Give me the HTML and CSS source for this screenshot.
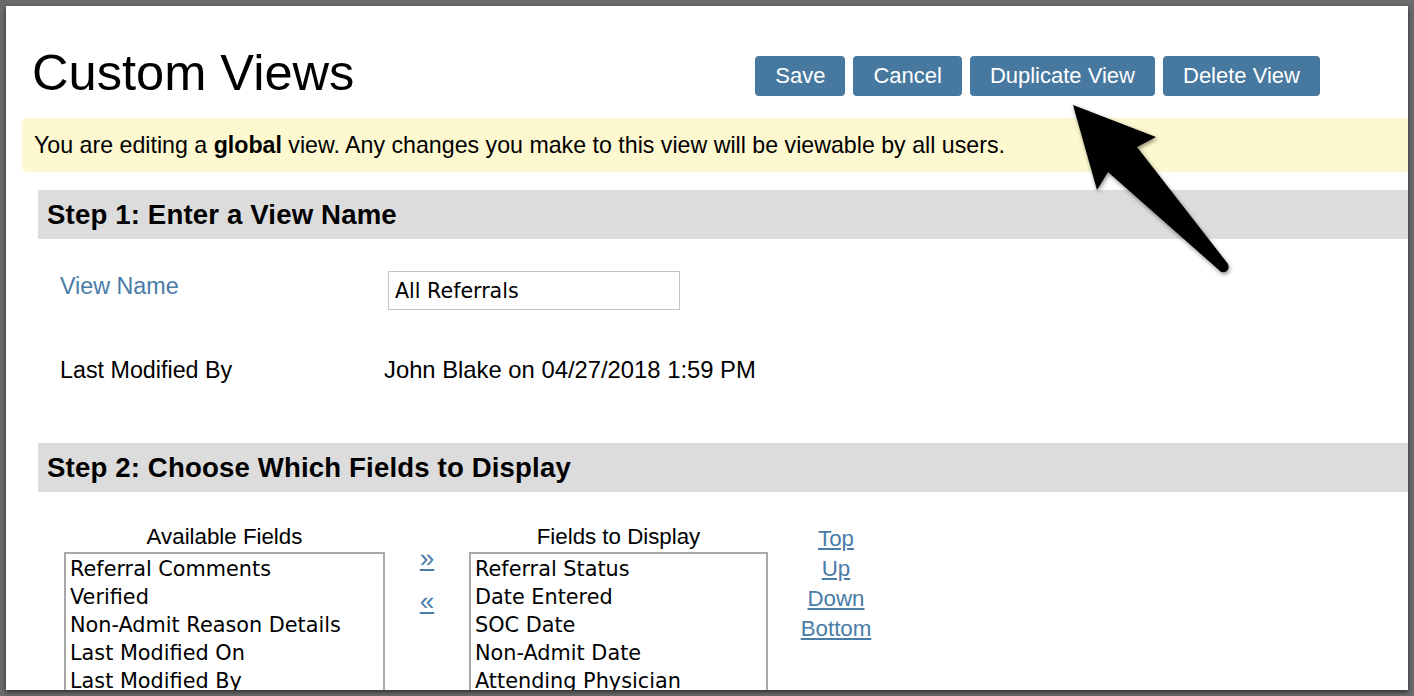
FILE: index.html
```html
<!DOCTYPE html>
<html lang="en">
<head>
<meta charset="utf-8">
<title>Custom Views</title>
<link rel="stylesheet" href="styles.css">
</head>
<body>
<div class="window">
  <header class="page-head">
    <h1 class="page-title">Custom Views</h1>
    <div class="actions">
      <button class="btn" type="button">Save</button>
      <button class="btn" type="button">Cancel</button>
      <button class="btn" type="button">Duplicate View</button>
      <button class="btn" type="button">Delete View</button>
    </div>
  </header>

  <div class="notice">You are editing a <b>global</b> view. Any changes you make to this view will be viewable by all users.</div>

  <section class="step step-name">
    <h2 class="step-title">Step 1: Enter a View Name</h2>
    <div class="form-grid">
      <label class="field-label link-text" for="view-name">View Name</label>
      <input class="text-input" id="view-name" type="text" value="All Referrals">
      <span class="field-label">Last Modified By</span>
      <span class="field-value">John Blake on 04/27/2018 1:59 PM</span>
    </div>
  </section>

  <section class="step step-fields">
    <h2 class="step-title">Step 2: Choose Which Fields to Display</h2>
    <div class="chooser">
      <div class="list-col list-available">
        <div class="list-label">Available Fields</div>
        <ul class="listbox">
          <li>Referral Comments</li>
          <li>Verified</li>
          <li>Non-Admit Reason Details</li>
          <li>Last Modified On</li>
          <li>Last Modified By</li>
        </ul>
      </div>
      <div class="move-col">
        <a class="move-link" href="#">&raquo;</a>
        <a class="move-link" href="#">&laquo;</a>
      </div>
      <div class="list-col list-display">
        <div class="list-label">Fields to Display</div>
        <ul class="listbox">
          <li>Referral Status</li>
          <li>Date Entered</li>
          <li>SOC Date</li>
          <li>Non-Admit Date</li>
          <li>Attending Physician</li>
        </ul>
      </div>
      <div class="order-col">
        <a class="order-link" href="#">Top</a>
        <a class="order-link" href="#">Up</a>
        <a class="order-link" href="#">Down</a>
        <a class="order-link" href="#">Bottom</a>
      </div>
    </div>
  </section>

  <svg class="callout-arrow" viewBox="1060 95 180 190" width="180" height="190" aria-hidden="true">
    <defs>
      <filter id="arrow-shadow" x="-20%" y="-20%" width="140%" height="140%">
        <feDropShadow dx="1" dy="2" stdDeviation="2" flood-color="#000" flood-opacity="0.45"/>
      </filter>
    </defs>
    <path filter="url(#arrow-shadow)" fill="#000"
      d="M1073 105 L1156 137 L1137 147 L1228 264 Q1230 270 1225 272 Q1221 273 1219 270 L1108 172 L1097 190 Z"/>
  </svg>
</div>
</body>
</html>
```

FILE: styles.css
```css
html, body {
  margin: 0;
  padding: 0;
}

body {
  background: #6b6b6b;
  width: 1414px;
  height: 696px;
  overflow: hidden;
  font-family: "Liberation Sans", Arial, Helvetica, sans-serif;
  color: #000;
}

.window {
  position: relative;
  margin: 6px;
  width: 1402px;
  height: 684px;
  background: #fff;
  overflow: hidden;
  box-shadow: 0 2px 5px rgba(0, 0, 0, 0.6);
}

/* header: title and action buttons */
.page-head {
  display: flex;
  align-items: flex-start;
  padding: 38px 0 0 26px;
  height: 58px;
}

.page-title {
  margin: 0;
  font-size: 50.6px;
  font-weight: normal;
  line-height: 58px;
}

.actions {
  display: flex;
  gap: 8px;
  margin: 12px 0 0 auto;
  padding-right: 88px;
}

.btn {
  height: 40px;
  padding: 0 20px;
  border: 0;
  border-radius: 4px;
  background: #4778a0;
  color: #fff;
  font-family: inherit;
  font-size: 22px;
  line-height: 40px;
}

/* global view notice */
.notice {
  margin: 16px -20px 0 16px;
  height: 54px;
  padding-left: 12px;
  background: #fdf8d0;
  border-radius: 5px;
  font-size: 23.2px;
  line-height: 54px;
  white-space: nowrap;
}

.notice b {
  font-weight: bold;
}

/* steps */
.step {
  margin-left: 32px;
}

.step-name {
  margin-top: 18px;
}

.step-fields {
  margin-top: 60px;
}

.step-title {
  margin: 0 -20px 0 0;
  height: 49px;
  padding-left: 9px;
  background: #dcdcdc;
  font-size: 27.6px;
  font-weight: bold;
  line-height: 49px;
  letter-spacing: 0.15px;
  white-space: nowrap;
}

.form-grid {
  display: grid;
  grid-template-columns: 324px auto;
  row-gap: 47px;
  padding: 32px 0 0 22px;
  align-items: start;
}

.field-label,
.field-value {
  font-size: 23.3px;
  line-height: 26px;
  white-space: nowrap;
}

.field-value {
  font-size: 23.8px;
}

.form-grid .link-text {
  padding-top: 2px;
}

.link-text {
  color: #4a7ca8;
}

.text-input {
  justify-self: start;
  box-sizing: border-box;
  margin: 0 0 0 4px;
  width: 292px;
  height: 39px;
  padding: 0 6px;
  border: 1px solid #c4c4c4;
  border-radius: 0;
  outline: none;
  font-family: "DejaVu Sans", sans-serif;
  font-size: 20.6px;
  color: #000;
}

/* field chooser */
.chooser {
  display: flex;
  align-items: flex-start;
  padding: 32px 0 0 26px;
}

.list-col {
  display: flex;
  flex-direction: column;
  align-items: center;
}

.list-available { width: 321px; }
.list-display { width: 299px; }

.list-label {
  font-size: 22.3px;
  line-height: 26px;
  white-space: nowrap;
}

.listbox {
  box-sizing: border-box;
  width: 100%;
  height: 200px;
  margin: 2px 0 0;
  padding: 1px 4px;
  list-style: none;
  border: 2px solid #a8a8a8;
  overflow: hidden;
  font-family: "DejaVu Sans", sans-serif;
  font-size: 20.8px;
  line-height: 28px;
  white-space: nowrap;
}

.move-col {
  display: flex;
  flex-direction: column;
  align-items: center;
  width: 84px;
  padding-top: 20px;
}

.move-link {
  display: block;
  color: #4a7ca8;
  font-size: 26px;
  line-height: 28px;
}

.move-link + .move-link {
  margin-top: 15px;
}

.order-col {
  display: flex;
  flex-direction: column;
  align-items: center;
  margin-left: 28px;
  width: 80px;
}

.order-link {
  display: block;
  color: #4a7ca8;
  font-size: 22.3px;
  line-height: 30px;
}

/* annotation arrow drawn over the page */
.callout-arrow {
  position: absolute;
  left: 1054px;
  top: 89px;
  overflow: visible;
}
```
